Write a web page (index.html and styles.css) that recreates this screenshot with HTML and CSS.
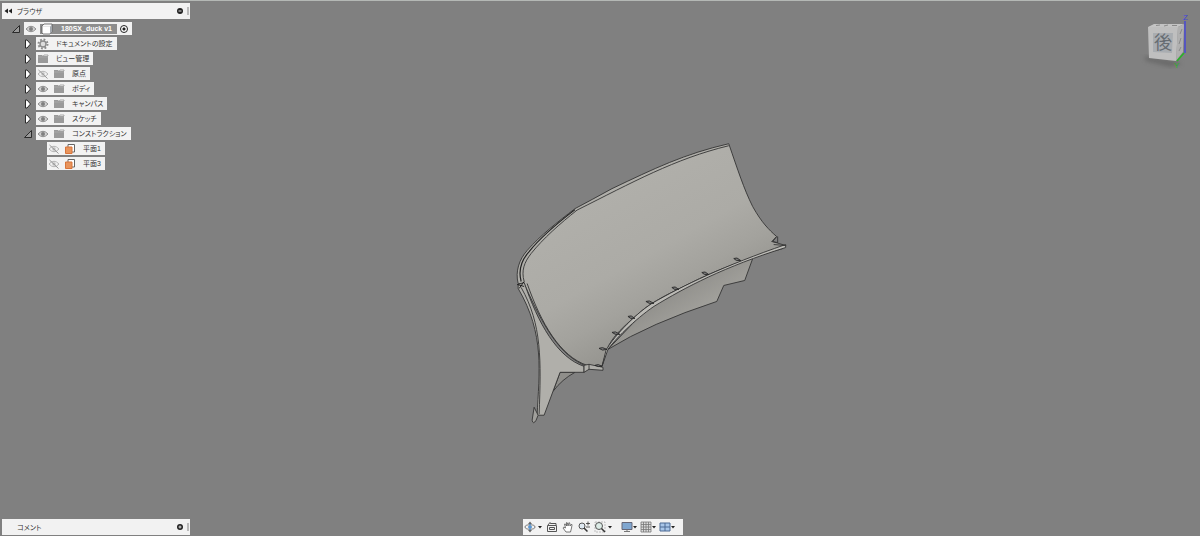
FILE: index.html
```html
<!DOCTYPE html>
<html lang="ja">
<head>
    <meta charset="UTF-8">
    <meta name="viewport" content="width=device-width, initial-scale=1.0">
    <title>180SX_duck v1</title>
    <link rel="stylesheet" href="styles.css">
</head>
<body>
    <!-- shared icons -->
    <svg class="sprite" aria-hidden="true">
        <symbol id="i-eye" viewBox="0 0 12 12">
            <path d="M1 6Q6 0.500 11 6Q6 11.500 1 6Z" fill="#d4d4d4" stroke="#8f8f8f"/>
            <circle cx="6" cy="6" r="2" fill="#808080"/>
        </symbol>
        <symbol id="i-eye-off" viewBox="0 0 12 12">
            <path d="M1 6Q6 0.500 11 6Q6 11.500 1 6Z" fill="none" stroke="#b5b5b5"/>
            <circle cx="6" cy="6" r="1.700" fill="#bdbdbd"/>
            <path d="M1.500 2L10.500 10.500" stroke="#969696"/>
        </symbol>
        <symbol id="i-folder" viewBox="0 0 12 12">
            <path d="M1 2H5L6 3H11V10H1Z" fill="#9a9a9a"/>
            <path d="M6 3.500L7 2H11V3" fill="none" stroke="#8a8a8a" stroke-width=".7"/>
            <path d="M1 4H11" stroke="#b5b5b5" stroke-width=".5"/>
        </symbol>
        <symbol id="i-gear" viewBox="0 0 12 12">
            <circle cx="6" cy="6" r="4.500" fill="none" stroke="#8c8c8c" stroke-width="2" stroke-dasharray="1.800 1.734"/>
            <circle cx="6" cy="6" r="3" fill="#ddd" stroke="#8c8c8c" stroke-width="1.400"/>
        </symbol>
        <symbol id="i-plane" viewBox="0 0 12 12">
            <path d="M4 1.500H10.500V9H4Z" fill="#fff" stroke="#666"/>
            <path d="M1.500 4H8V10.500H1.500Z" fill="#e8945c" stroke="#d8743a"/>
        </symbol>
        <symbol id="i-body" viewBox="0 0 12 12">
            <path d="M1 3L3 1H11V8.500L9 11H2L1 10Z" fill="#fff" stroke="#555" stroke-width=".8"/>
            <path d="M9 10.800V3.500L11 1.500V8.500Z" fill="#a3a8ae"/>
            <path d="M1.500 3.300H9" stroke="#ccc" stroke-width=".6"/>
        </symbol>
        <symbol id="i-closed" viewBox="0 0 10 10">
            <path d="M2.500 1H4L7.500 5L4 9H2.500Z" fill="#fff" stroke="#2b2b2b"/>
        </symbol>
        <symbol id="i-open" viewBox="0 0 10 10">
            <path d="M8.500 1.500V8.500H1.500Z" fill="#999" stroke="#2b2b2b"/>
        </symbol>
        <symbol id="i-caret" viewBox="0 0 4 4">
            <path d="M0 1H4L2 3.500Z" fill="#222"/>
        </symbol>
    </svg>

    <main class="workspace">
        <svg class="model" viewBox="0 0 1200 536" role="img" aria-label="180SX_duck">
            <defs>
                <linearGradient id="skin" x1="610" y1="170" x2="690" y2="315" gradientUnits="userSpaceOnUse">
                    <stop offset="0" stop-color="#b1b0ab"/>
                    <stop offset=".55" stop-color="#acaba6"/>
                    <stop offset=".78" stop-color="#a3a29d"/>
                    <stop offset="1" stop-color="#969590"/>
                </linearGradient>
                <linearGradient id="under" x1="690" y1="270" x2="715" y2="310" gradientUnits="userSpaceOnUse">
                    <stop offset="0" stop-color="#8d8c88"/>
                    <stop offset="1" stop-color="#a5a49f"/>
                </linearGradient>
            </defs>
            <g stroke="#333" stroke-width=".9" stroke-linejoin="round">
                <!-- underside -->
                <path d="M608 349Q650 323 717 301L724 285L745 280L753 258L700 275L650 305Z" fill="url(#under)"/>
                <path d="M553 391Q562 379 575 372H560Z" fill="#8f8e8a"/>
                <!-- main skin -->
                <path d="M518 283C515 271 519 259 527 250C540 235 558 221 575 208Q592 199 612 188C654 168 685 153 729 143C738 169 744 188 753 206C762 222 769 229 777 236L773 241L786 245L783 248C750 257 715 270 690 283C665 295 650 303 640 312C625 325 612 336 607 349L602 366L587 366C560 356 543 326 524 283Z" fill="url(#skin)"/>
                <path d="M524 281C521 270 524 262 531 253C543 238 560 223 577 209.500C632 182 675 158 729 145" fill="none"/>
                <path d="M521 281C518 270 521 260 529 251C541 236 558 222 575 209" fill="none" stroke="#222" stroke-width="1.200"/>
                <!-- side plate -->
                <path d="M518 284L524 282C538 323 557 357 584 366V372H560L544 415H537C539 372 545 334 518 288Z" fill="#b0afaa"/>
                <path d="M521 287C542 324 541 360 539 414M527 283C541 323 560 356 587 365" fill="none"/>
                <path d="M534 407L532 420Q533 425 536 420L538 415Z" fill="#a09f9b"/>
                <path d="M584 365L589 364L603 367V370L589 369L584 372ZM589 364V369" fill="#b0afaa"/>
                <path d="M517 284L524 286M519 288L524 281" stroke="#111"/>
                <!-- lower flange -->
                <path d="M602 366L606 350C612 339 632 316 652 303C683 285 725 265 786 244V247C725 266 685 287 654 306C635 319 614 340 608 349Z" fill="#bcbbb6"/>
                <path d="M777 236L772 241L778 242V236M774 244L786 245" fill="none"/>
            </g>
            <g fill="#777" stroke="#222" stroke-width=".8">
                <path d="M734 258Q737 256 741 260Q736 261 734 258Z"/>
                <path d="M702 272Q705 270 709 274Q704 275 702 272Z"/>
                <path d="M672 287Q675 285 679 289Q674 290 672 287Z"/>
                <path d="M646 301Q649 299 654 303Q649 304 646 301Z"/>
                <path d="M628 316Q631 314 635 318Q630 319 628 316Z"/>
                <path d="M612 332Q615 330 620 334Q615 335 612 332Z"/>
                <path d="M599 348Q602 346 607 349Q602 351 599 348Z"/>
                <path d="M595 365Q598 363 602 366Q598 367 595 365Z"/>
            </g>
        </svg>

        <aside class="browser">
            <header class="panel">
                <button class="icon-button" aria-label="折りたたむ"><svg class="rewind" viewBox="0 0 8 6"><path d="M4 .5V5.500L0.500 3ZM8 .5V5.500L4.500 3Z" fill="#222"/></svg></button>
                <h1 class="panel-title">ブラウザ</h1>
                <button class="icon-button" aria-label="最小化"><svg class="dot" viewBox="0 0 6 6"><circle cx="3" cy="3" r="3" fill="#222"/><path d="M1.500 3H4.500" stroke="#ddd"/></svg></button>
                <span class="grip"></span>
            </header>

            <ul class="tree">
                <li class="row">
                    <button class="icon-button" aria-label="閉じる"><svg class="arrow"><use href="#i-open"/></svg></button>
                    <div class="item root">
                        <button class="icon-button" aria-label="非表示"><svg class="icon"><use href="#i-eye"/></svg></button>
                        <span class="selected"><svg class="icon"><use href="#i-body"/></svg><span class="root-name">180SX_duck v1</span></span>
                        <input class="activate" type="radio" name="active" aria-label="アクティブにする" checked>
                    </div>
                </li>
                <li class="row level-2">
                    <button class="icon-button" aria-label="開く"><svg class="arrow"><use href="#i-closed"/></svg></button>
                    <div class="item"><svg class="icon"><use href="#i-gear"/></svg><span class="label">ドキュメントの設定</span></div>
                </li>
                <li class="row level-2">
                    <button class="icon-button" aria-label="開く"><svg class="arrow"><use href="#i-closed"/></svg></button>
                    <div class="item"><svg class="icon"><use href="#i-folder"/></svg><span class="label">ビュー管理</span></div>
                </li>
                <li class="row level-2">
                    <button class="icon-button" aria-label="開く"><svg class="arrow"><use href="#i-closed"/></svg></button>
                    <div class="item"><button class="icon-button" aria-label="表示"><svg class="icon"><use href="#i-eye-off"/></svg></button><svg class="icon"><use href="#i-folder"/></svg><span class="label">原点</span></div>
                </li>
                <li class="row level-2">
                    <button class="icon-button" aria-label="開く"><svg class="arrow"><use href="#i-closed"/></svg></button>
                    <div class="item"><button class="icon-button" aria-label="非表示"><svg class="icon"><use href="#i-eye"/></svg></button><svg class="icon"><use href="#i-folder"/></svg><span class="label">ボディ</span></div>
                </li>
                <li class="row level-2">
                    <button class="icon-button" aria-label="開く"><svg class="arrow"><use href="#i-closed"/></svg></button>
                    <div class="item"><button class="icon-button" aria-label="非表示"><svg class="icon"><use href="#i-eye"/></svg></button><svg class="icon"><use href="#i-folder"/></svg><span class="label">キャンパス</span></div>
                </li>
                <li class="row level-2">
                    <button class="icon-button" aria-label="開く"><svg class="arrow"><use href="#i-closed"/></svg></button>
                    <div class="item"><button class="icon-button" aria-label="非表示"><svg class="icon"><use href="#i-eye"/></svg></button><svg class="icon"><use href="#i-folder"/></svg><span class="label">スケッチ</span></div>
                </li>
                <li class="row level-2">
                    <button class="icon-button" aria-label="閉じる"><svg class="arrow"><use href="#i-open"/></svg></button>
                    <div class="item"><button class="icon-button" aria-label="非表示"><svg class="icon"><use href="#i-eye"/></svg></button><svg class="icon"><use href="#i-folder"/></svg><span class="label">コンストラクション</span></div>
                </li>
                <li class="row level-3">
                    <div class="item"><button class="icon-button" aria-label="表示"><svg class="icon"><use href="#i-eye-off"/></svg></button><svg class="icon"><use href="#i-plane"/></svg><span class="label">平面1</span></div>
                </li>
                <li class="row level-3">
                    <div class="item"><button class="icon-button" aria-label="表示"><svg class="icon"><use href="#i-eye-off"/></svg></button><svg class="icon"><use href="#i-plane"/></svg><span class="label">平面3</span></div>
                </li>
            </ul>
        </aside>

        <svg class="view-cube" viewBox="0 0 50 60" role="img" aria-label="ビューキューブ">
            <defs><filter id="soft"><feGaussianBlur stdDeviation="2"/></filter></defs>
            <path d="M4 46L36 51L42 54L30 57L6 51Z" fill="#555" opacity=".5" filter="url(#soft)"/>
            <path d="M8 17L14 14H44L38 17Z" fill="#c4c4c4"/>
            <path d="M38 17L44 14L43 42L36 51Z" fill="#b0b0b0"/>
            <path d="M8 17L38 17L36 51L9 48Z" fill="#bfbfbf"/>
            <path d="M13 23H33L32 43L13 42Z" fill="#a9adb1"/>
            <path d="M16 15.500L20 15M24 16L28 15M32 15.500H37M42 19L40 24M41 28L39 34M41 37L39 41" stroke="#8a8a8a" stroke-width="1"/>
            <path d="M45 11V43" stroke="#4444dc" stroke-width="1.400"/>
            <path d="M44 43L37 51" stroke="#28b428" stroke-width="1.600"/>
            <text class="face" x="14" y="39">後</text>
            <text class="axis-z" x="43" y="10">Z</text>
            <text class="axis-y" x="34" y="58">Y</text>
        </svg>

        <section class="panel comments">
            <h2 class="panel-title">コメント</h2>
            <button class="icon-button" aria-label="コメントを追加"><svg class="dot" viewBox="0 0 6 6"><circle cx="3" cy="3" r="3" fill="#222"/><path d="M1.500 3H4.500M3 1.500V4.500" stroke="#ddd"/></svg></button>
            <span class="grip"></span>
        </section>

        <nav class="toolbar" aria-label="ナビゲーション">
            <button class="tool" aria-label="オービット">
                <svg class="tool-icon" viewBox="0 0 12 12"><ellipse cx="6" cy="6" rx="5" ry="2.200" fill="none" stroke="#777"/><path d="M6 .5L8 3H4ZM6 11.500L8 9H4Z" fill="#666"/><path d="M6 3V9M4 6H8" stroke="#4f8fce" stroke-width="1.400"/></svg>
                <svg class="caret"><use href="#i-caret"/></svg>
            </button>
            <button class="tool" aria-label="ビュー正面">
                <svg class="tool-icon" viewBox="0 0 12 12"><path d="M1.500 4.500H10.500V10.500H1.500ZM3.500 6.500H8.500V8.500H3.500ZM2 4L4 1.500L5 3M5 2.500H10V4" fill="none" stroke="#555"/></svg>
            </button>
            <button class="tool" aria-label="画面移動">
                <svg class="tool-icon" viewBox="0 0 12 12"><path d="M4 11L1 7Q1 5.500 3.500 7L2.500 3Q3.500 2 4.500 5L4.500 1.500Q5.500 .5 6 5L7 1.500Q8 1 8 5L9.500 3Q10.500 3 9.500 7L8.500 11Z" fill="#fff" stroke="#555" stroke-width=".8"/></svg>
            </button>
            <button class="tool" aria-label="ズーム">
                <svg class="tool-icon" viewBox="0 0 12 12"><circle cx="4" cy="5" r="3" fill="#dfe9f2" stroke="#555"/><path d="M6 7L9.500 10.500" stroke="#333" stroke-width="1.500"/><path d="M8 2.500H12M10 .5V4.500M8 6H12" stroke="#333" stroke-width=".8"/></svg>
            </button>
            <button class="tool" aria-label="フィット">
                <svg class="tool-icon" viewBox="0 0 12 12"><path d="M1 1H11V11H1Z" fill="none" stroke="#aaa" stroke-dasharray="2 1" stroke-width=".7"/><circle cx="5" cy="5" r="3.500" fill="#dcebe6" stroke="#555"/><path d="M7.500 7.500L11 11" stroke="#333" stroke-width="1.500"/></svg>
                <svg class="caret"><use href="#i-caret"/></svg>
            </button>
            <div class="display-tools">
                <button class="tool" aria-label="表示設定">
                    <svg class="tool-icon" viewBox="0 0 12 12"><path d="M1 1.500H11V8.500H1Z" fill="#7fa6d0" stroke="#667"/><path d="M6 8.500V10.500M3 10.500H9" stroke="#777"/></svg>
                    <svg class="caret"><use href="#i-caret"/></svg>
                </button>
                <button class="tool" aria-label="グリッドとスナップ">
                    <svg class="tool-icon" viewBox="0 0 12 12"><path d="M1 1H11V11H1ZM3.500 1V11M6 1V11M8.500 1V11M1 3.500H11M1 6H11M1 8.500H11" fill="#ddd" stroke="#777" stroke-width=".8"/></svg>
                    <svg class="caret"><use href="#i-caret"/></svg>
                </button>
                <button class="tool" aria-label="ビューポート">
                    <svg class="tool-icon" viewBox="0 0 12 12"><path d="M1 2H11V10H1ZM6 2V10M1 6H11" fill="#a9c6e8" stroke="#4c6a94"/></svg>
                    <svg class="caret"><use href="#i-caret"/></svg>
                </button>
            </div>
        </nav>
    </main>
</body>
</html>
```
FILE: styles.css
```css
* {
    box-sizing: border-box;
}
body {
    margin: 0;
    font-family: "Liberation Sans", "Noto Sans CJK JP", sans-serif;
    font-size: 7px;
    color: #333;
    background-color: #808080;
}
svg {
    display: block;
    flex: none;
}
.sprite {
    position: absolute;
    width: 0;
    height: 0;
}
.workspace {
    position: relative;
    display: grid;
    grid-template-columns: 1fr auto 1fr;
    grid-template-rows: 1fr auto;
    min-height: 100vh;
    padding: 2px 0 1px 2px;
    border-top: 1px solid #b4b8b5;
}
.model {
    position: absolute;
    top: 0;
    left: 0;
    width: 100%;
    height: 100%;
}
.browser {
    position: relative;
    grid-column: 1 / 3;
}
.panel {
    position: relative;
    display: flex;
    align-items: center;
    width: 188px;
    height: 16px;
    padding: 0 1px 0 2px;
    background-color: #f2f2f2;
}
.panel-title {
    flex: 1;
    margin: 0 0 0 5px;
    font-size: 7px;
    font-weight: normal;
    font-feature-settings: "palt";
}
.icon-button {
    display: block;
    flex: none;
    padding: 0;
    border: none;
    background: none;
    cursor: pointer;
}
.rewind {
    width: 8px;
    height: 6px;
}
.dot {
    width: 6px;
    height: 6px;
}
.grip {
    width: 2px;
    height: 8px;
    margin-left: 4px;
    border: solid #bbb;
    border-width: 0 1px;
}
.tree {
    display: grid;
    gap: 2px;
    margin: 3px 0 0;
    padding: 0 0 0 9px;
    list-style: none;
}
.row {
    display: flex;
    align-items: center;
    gap: 3px;
}
.level-2 {
    padding-left: 12px;
}
.level-3 {
    padding-left: 36px;
}
.arrow {
    width: 10px;
    height: 10px;
}
.item {
    display: flex;
    align-items: center;
    gap: 4px;
    height: 13px;
    padding: 0 4px 0 1px;
    background-color: #f2f2f2;
}
.icon {
    width: 12px;
    height: 12px;
}
.label {
    margin-left: 3px;
    line-height: 13px;
    white-space: nowrap;
    font-feature-settings: "palt";
}
.selected {
    display: flex;
    align-items: center;
    gap: 8px;
    height: 10px;
    padding: 0 5px 0 1px;
    background-color: #8e8e8e;
}
.root-name {
    font-weight: bold;
    color: #fff;
}
.item.root {
    gap: 3px;
}
.activate {
    appearance: none;
    width: 8px;
    height: 8px;
    margin: 0;
    border: 1px solid #222;
    border-radius: 50%;
    background: radial-gradient(#222 0 1px, #fff 2px);
}
.view-cube {
    position: relative;
    grid-column: 3;
    justify-self: end;
    width: 50px;
    height: 60px;
    margin: 7px 10px 0 0;
}
.face {
    font-family: "Noto Sans CJK JP", sans-serif;
    font-size: 18px;
    fill: #666c72;
}
.axis-z,
.axis-y {
    font-size: 8px;
}
.axis-z {
    fill: #4444dc;
}
.axis-y {
    fill: #28b428;
}
.comments {
    grid-column: 1;
}
.comments .panel-title {
    margin-left: 13px;
}
.toolbar {
    position: relative;
    grid-column: 2;
    display: flex;
    align-items: center;
    gap: 4px;
    height: 16px;
    margin-left: 3px;
    padding: 0 8px 0 1px;
    background-color: #f2f2f2;
}
.display-tools {
    display: flex;
    gap: 3px;
    margin-left: 5px;
}
.tool {
    display: flex;
    align-items: center;
    gap: 2px;
    padding: 0;
    border: none;
    background: none;
    cursor: pointer;
}
.display-tools .tool {
    gap: 0;
}
.tool-icon {
    width: 12px;
    height: 12px;
}
.caret {
    width: 4px;
    height: 4px;
}
```
